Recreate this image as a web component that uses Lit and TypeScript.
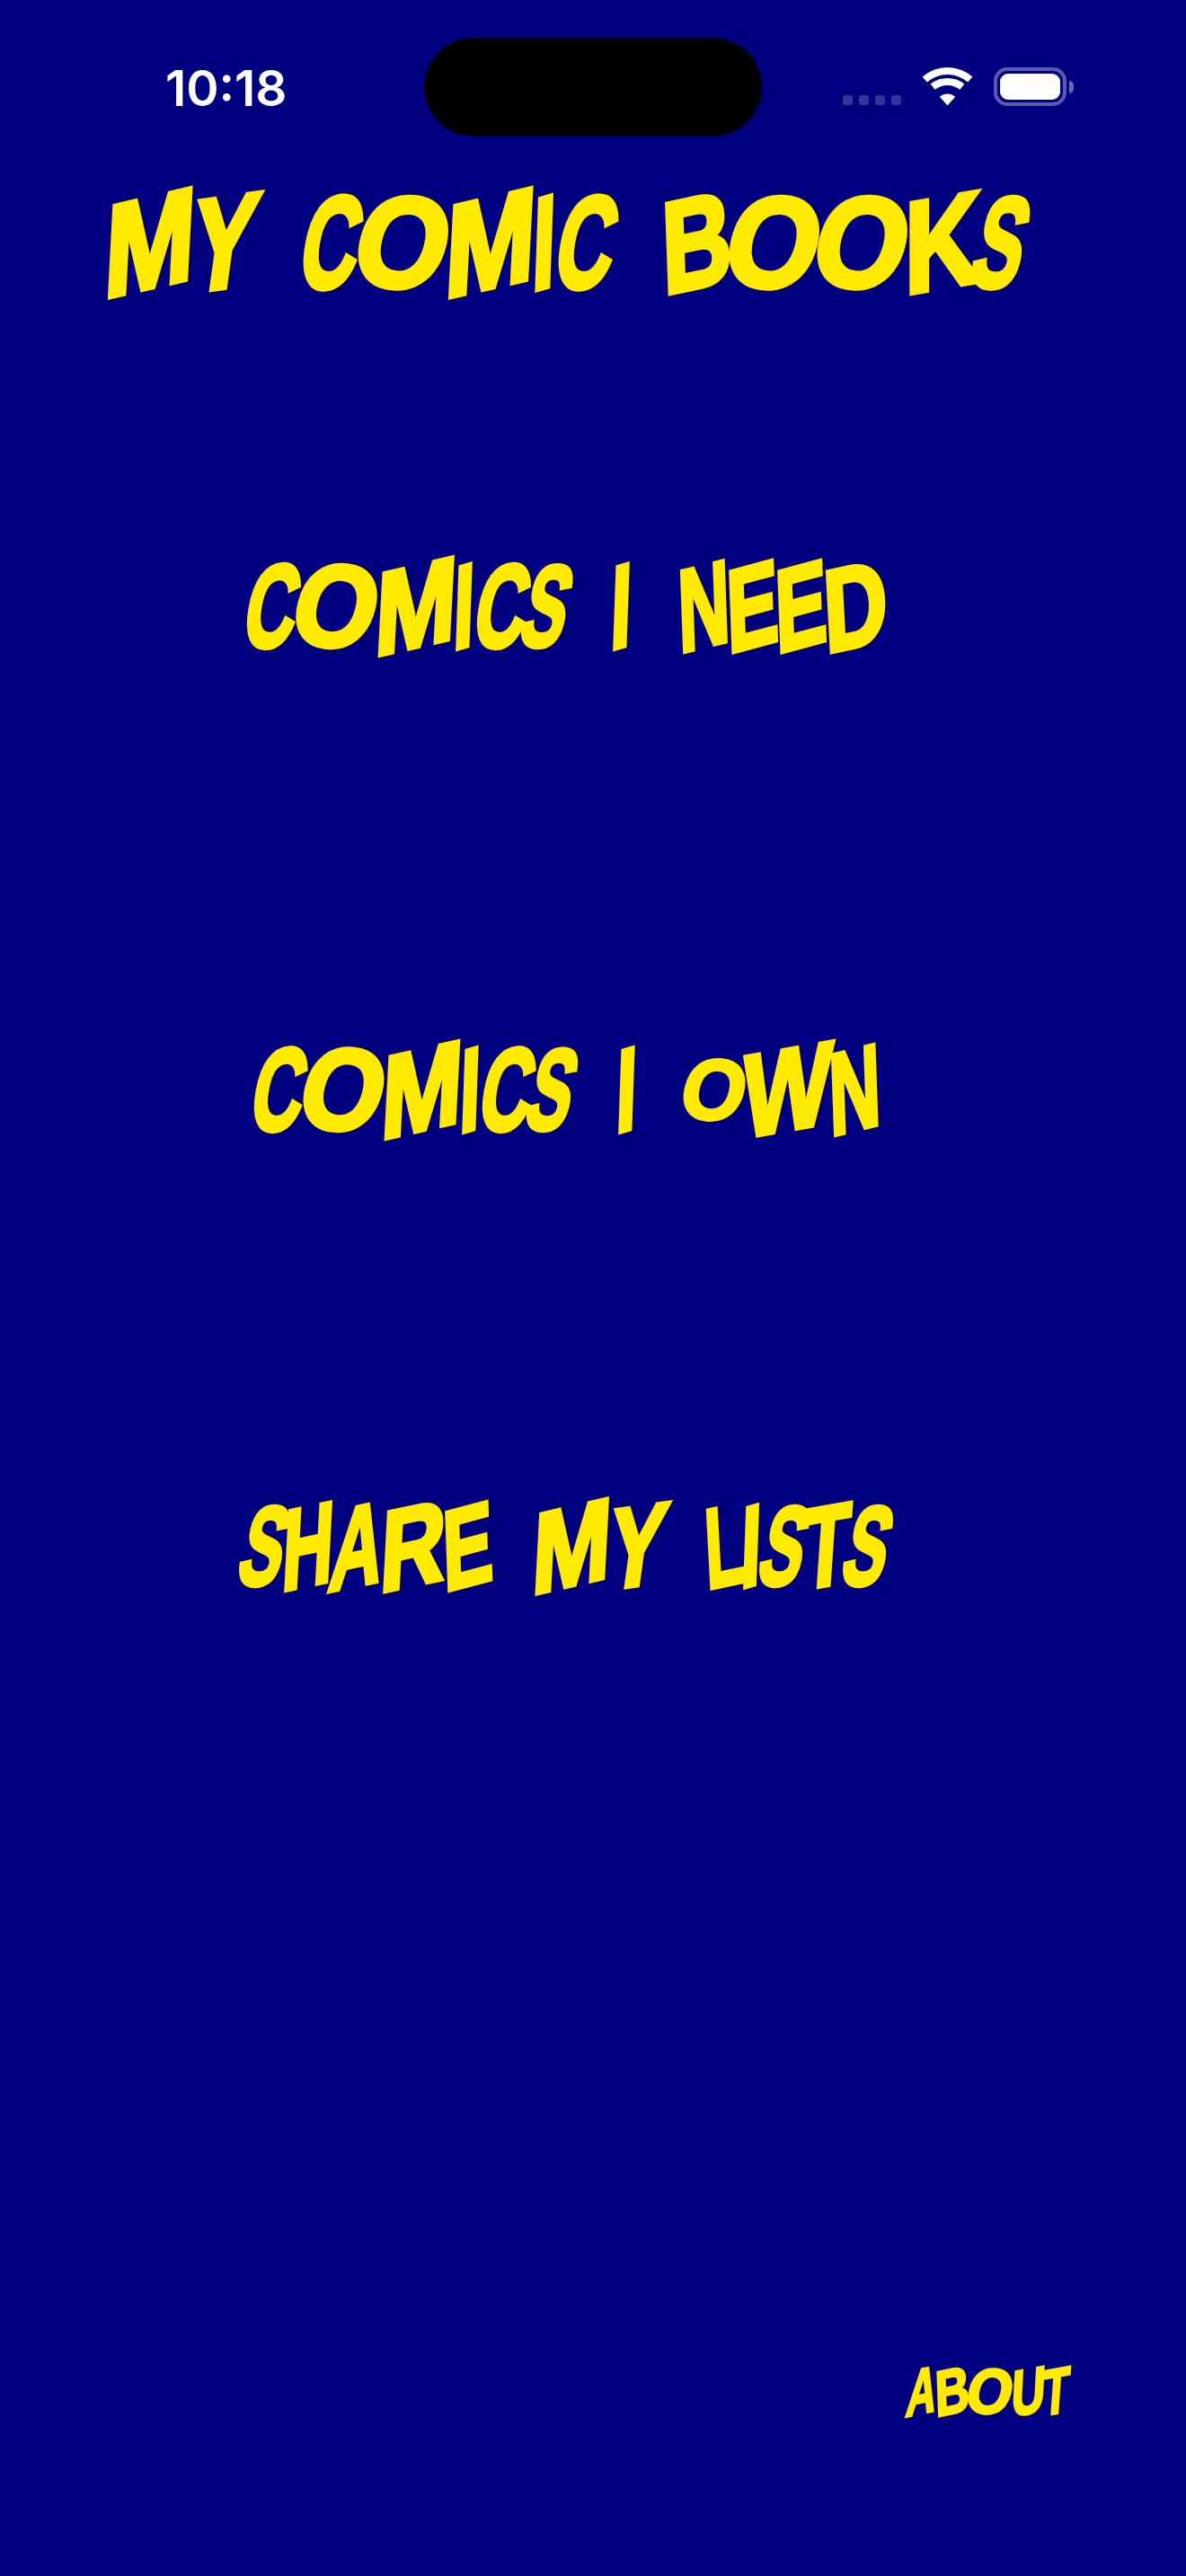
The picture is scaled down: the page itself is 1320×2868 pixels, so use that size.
import { LitElement, html, css, svg } from "lit";
import { customElement, property } from "lit/decorators.js";

// width (per unit of cap height), glyph advance (em), skewY, skewX, rotate, scaleY
const GLYPHS: Record<string, [number, number, number, number, number, number]> = {
  A: [0.63, 0.722, -12, -7, 0, 1],
  B: [0.73, 0.722, -12, 2, 0, 1],
  C: [0.6, 0.722, -8, -6, 4, 1],
  D: [0.74, 0.722, -12, 3, 0, 1],
  E: [0.6, 0.667, -15, 2, 0, 1],
  H: [0.61, 0.722, -12, -3, 0, 1],
  I: [0.24, 0.278, -16, -2, 0, 1],
  K: [0.8, 0.722, -10, 0, 0, 1],
  L: [0.46, 0.611, -12, 3, 0, 1],
  M: [0.95, 0.833, -13, -3, 0, 1],
  N: [0.6, 0.722, -14, 2, 0, 1],
  O: [0.96, 0.778, 0, -8, 6, 1],
  o: [0.74, 0.778, 0, -8, 6, 0.74],
  R: [0.78, 0.722, -12, -3, 0, 1],
  S: [0.51, 0.667, -6, -6, 8, 1],
  T: [0.56, 0.611, -10, -4, 0, 1],
  U: [0.72, 0.722, -10, -3, 0, 1],
  W: [1.04, 0.944, -10, -3, 0, 1],
  Y: [0.68, 0.667, -8, -8, 0, 1],
};

const band = (r1: number, r2: number, deg: number) => {
  const a = (deg * Math.PI) / 180;
  const cx = 28.5;
  const cy = 42.5;
  const p = (r: number, s: number) =>
    `${(cx + s * r * Math.sin(a)).toFixed(2)} ${(cy - r * Math.cos(a)).toFixed(2)}`;
  const inner = r2 > 0 ? `L${p(r2, 1)} A${r2} ${r2} 0 0 0 ${p(r2, -1)}` : `L${cx} ${cy}`;
  return `M${p(r1, -1)} A${r1} ${r1} 0 0 1 ${p(r1, 1)} ${inner} Z`;
};

@customElement("comic-text")
class ComicText extends LitElement {
  @property() text = "";
  @property({ type: Number }) cap = 100;

  static styles = css`
    :host {
      display: inline-flex;
      align-items: center;
      color: #ffea00;
      font-family: "Liberation Sans", Arial, sans-serif;
      font-weight: 700;
      line-height: 1;
      white-space: nowrap;
    }
    .ch {
      display: inline-flex;
      justify-content: center;
      flex: none;
      -webkit-text-stroke: 0.042em #ffea00;
    }
    .sp {
      display: inline-block;
      flex: none;
    }
  `;

  render() {
    const h = this.cap;
    const fs = h / 0.729;
    return html`${[...this.text].map((c) => {
      if (c === " ") return html`<span class="sp" style="width:${h * 0.52}px"></span>`;
      const [w, adv, sy, sx, rot, sv] = GLYPHS[c];
      const sc = (w * h) / (adv * fs);
      const gap = c === "I" ? 0.03 : -0.03;
      return html`<span
        class="ch"
        style="font-size:${fs}px;width:${w * h}px;margin-right:${gap * h}px;transform:rotate(${rot}deg) skewY(${sy}deg) skewX(${sx}deg) scale(${sc},${sv})"
        >${c.toUpperCase()}</span
      >`;
    })}`;
  }
}

@customElement("app-root")
class AppRoot extends LitElement {
  static styles = css`
    :host {
      display: block;
      width: 1320px;
      height: 2868px;
      background: #000080;
      overflow: hidden;
      position: relative;
    }
    .island {
      position: absolute;
      left: 472px;
      top: 42px;
      width: 376px;
      height: 110px;
      border-radius: 55px;
      background: #000;
    }
    .status {
      height: 210px;
      box-sizing: border-box;
      padding: 75px 125px 0 184px;
      display: flex;
      justify-content: space-between;
      align-items: flex-start;
    }
    .time {
      color: #fff;
      font-family: Inter, "Liberation Sans", sans-serif;
      font-weight: 600;
      font-size: 55px;
      line-height: 46px;
      letter-spacing: 0;
    }
    .icons {
      display: flex;
      align-items: flex-start;
    }
    .dots {
      display: flex;
      gap: 7px;
      margin: 31px 23px 0 0;
    }
    .dots i {
      width: 11px;
      height: 11px;
      border-radius: 3px;
      background: rgba(255, 255, 255, 0.2);
    }
    .wifi {
      display: block;
      width: 57px;
      height: 43px;
      margin-right: 23px;
    }
    .battery {
      width: 81px;
      height: 43px;
      box-sizing: border-box;
      border: 4px solid rgba(255, 255, 255, 0.36);
      border-radius: 15px;
      padding: 3px;
    }
    .battery b {
      display: block;
      height: 100%;
      border-radius: 9px;
      background: #fff;
    }
    .nub {
      width: 5px;
      height: 14px;
      margin: 15px 0 0 3px;
      border-radius: 0 5px 5px 0;
      background: rgba(255, 255, 255, 0.4);
    }
    .row {
      display: flex;
      justify-content: center;
      align-items: center;
      height: 104px;
      width: 1260px;
    }
    .title { height: 120px; width: 1256px; }
    .need { margin-top: 293px; }
    .own { margin-top: 435px; }
    .share { margin-top: 404px; width: 1258px; }
    .about {
      margin-top: 860px;
      height: 58px;
      justify-content: flex-end;
      width: 1189px;
    }
  `;

  render() {
    return html`
      <div class="island"></div>
      <div class="status">
        <div class="time">10:18</div>
        <div class="icons">
          <div class="dots"><i></i><i></i><i></i><i></i></div>
          <svg class="wifi" viewBox="0 0 57 43" fill="#fff">
            ${svg`<path d=${band(42.5, 34.5, 41)} /><path d=${band(30.5, 22.5, 38)} /><path d=${band(13, 0, 42)} />`}
          </svg>
          <div class="battery"><b></b></div>
          <div class="nub"></div>
        </div>
      </div>
      <div class="row title"><comic-text text="MY COMIC BOOKS" cap="105.5"></comic-text></div>
      <div class="row need"><comic-text text="COMICS I NEED" cap="95"></comic-text></div>
      <div class="row own"><comic-text text="COMICS I oWN" cap="94.5"></comic-text></div>
      <div class="row share"><comic-text text="SHARE MY LISTS" cap="92"></comic-text></div>
      <div class="row about"><comic-text text="ABOUT" cap="52"></comic-text></div>
    `;
  }
}
